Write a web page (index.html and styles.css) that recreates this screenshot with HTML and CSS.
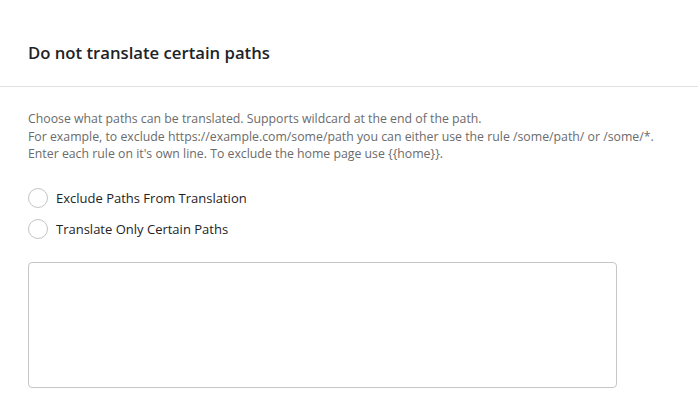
FILE: index.html
```html
<!DOCTYPE html>
<html>
<head>
<meta charset="utf-8">
<link rel="stylesheet" href="styles.css">
</head>
<body>
<div class="panel">
  <div class="panel-head">
    <h2 class="title">Do not translate certain paths</h2>
  </div>
  <div class="panel-body">
    <p class="desc">Choose what paths can be translated. Supports wildcard at the end of the path.<br>For example, to exclude https://example.com/some/path you can either use the rule /some/path/ or /some/*.<br>Enter each rule on it's own line. To exclude the home page use {{home}}.</p>
    <div class="options">
      <label class="option"><span class="radio"></span><span class="label">Exclude Paths From Translation</span></label>
      <label class="option"><span class="radio"></span><span class="label">Translate Only Certain Paths</span></label>
    </div>
    <div class="rules"></div>
  </div>
</div>
</body>
</html>
```
FILE: styles.css
```css
html, body {
  margin: 0;
  background: #fff;
}
body {
  font-family: "Open Sans", "Noto Sans", sans-serif;
  color: #1d2327;
}
.panel-head {
  padding: 41px 0 21px 28px;
  border-bottom: 1px solid #e2e2e2;
}
.title {
  margin: 0;
  font-size: 16.7px;
  line-height: 24px;
  font-weight: 600;
  color: #1d2327;
}
.panel-body {
  padding: 0 0 0 28px;
}
.desc {
  margin: 23px 0 0;
  font-size: 12.3px;
  line-height: 17.5px;
  color: #6b6b6b;
}
.options {
  margin-top: 25px;
  display: flex;
  flex-direction: column;
  gap: 11px;
}
.option {
  display: flex;
  align-items: center;
  gap: 8px;
  height: 20px;
  font-size: 13px;
  color: #1d2327;
}
.radio {
  box-sizing: border-box;
  width: 20px;
  height: 20px;
  border: 1px solid #c4c4c4;
  border-radius: 50%;
  background: #fff;
}
.rules {
  box-sizing: border-box;
  margin-top: 23px;
  width: 589px;
  height: 126px;
  border: 1px solid #c6c6c6;
  border-radius: 4px;
  background: #fff;
}
```
